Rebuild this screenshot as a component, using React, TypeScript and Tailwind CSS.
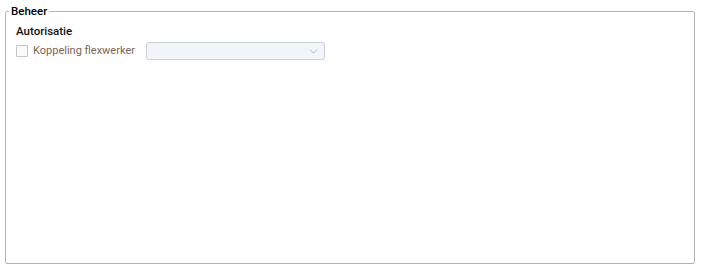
import { ChevronDown } from "lucide-react";

export default function App() {
  return (
    <div className="h-[274px] w-[702px] bg-white pl-[5px] pr-[7px] pt-[4px] font-['Roboto',sans-serif] text-[11px]">
      <fieldset className="h-[260px] rounded-[2px] border border-[#b4b4b4] px-[10px] pb-2 pt-[6px]">
        <legend className="-ml-[7px] px-[2px] text-[11.5px] font-medium leading-[14px] text-black">
          Beheer
        </legend>
        <h3 className="text-[11.5px] font-medium leading-[14px] text-[#111]">Autorisatie</h3>
        <div className="mt-[4px] flex items-center gap-[5px]">
          <span className="h-[12px] w-[12px] rounded-[1px] border border-[#c4c4c4] bg-[#fbfbfb]" />
          <span className="text-[#7a6654]">Koppeling flexwerker</span>
          <div className="ml-[6px] flex h-[18px] w-[179px] items-center justify-end rounded-[3px] border border-[#c9d2dc] bg-[#f1f5f9] pr-[4px]">
            <ChevronDown className="h-[13px] w-[13px] text-[#8a93a0]" strokeWidth={1.25} />
          </div>
        </div>
      </fieldset>
    </div>
  );
}
